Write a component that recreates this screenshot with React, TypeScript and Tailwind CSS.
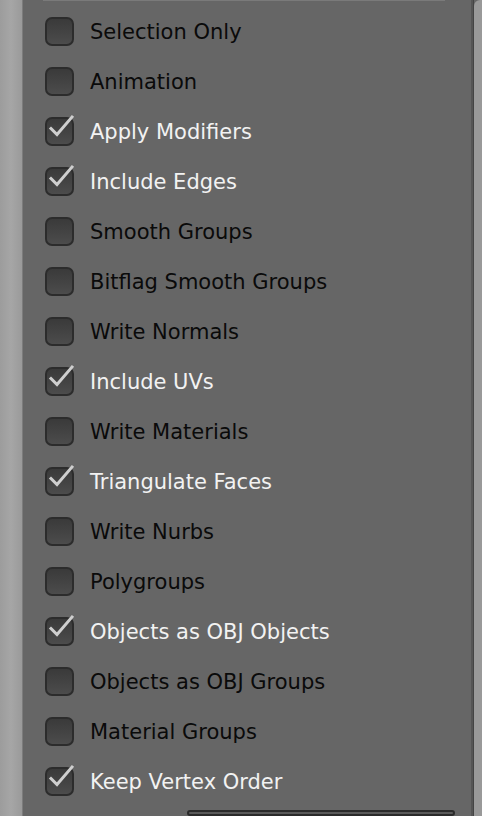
const options: { label: string; checked: boolean }[] = [
  { label: "Selection Only", checked: false },
  { label: "Animation", checked: false },
  { label: "Apply Modifiers", checked: true },
  { label: "Include Edges", checked: true },
  { label: "Smooth Groups", checked: false },
  { label: "Bitflag Smooth Groups", checked: false },
  { label: "Write Normals", checked: false },
  { label: "Include UVs", checked: true },
  { label: "Write Materials", checked: false },
  { label: "Triangulate Faces", checked: true },
  { label: "Write Nurbs", checked: false },
  { label: "Polygroups", checked: false },
  { label: "Objects as OBJ Objects", checked: true },
  { label: "Objects as OBJ Groups", checked: false },
  { label: "Material Groups", checked: false },
  { label: "Keep Vertex Order", checked: true },
];

function Checkbox({ checked }: { checked: boolean }) {
  return (
    <div className="relative w-[29px] h-[29px] shrink-0">
      <div className="w-full h-full rounded-[7px] border-2 border-[#2c2c2c] bg-gradient-to-b from-[#3a3a3a] to-[#4c4c4c]" />
      {checked && (
        <svg
          className="absolute left-0 top-[-5px]"
          width="32"
          height="32"
          viewBox="0 0 32 32"
          fill="none"
        >
          <path
            d="M6 16.5 L12 22.5 L27 5"
            stroke="#cfcfcf"
            strokeWidth="3"
            strokeLinecap="square"
            strokeLinejoin="miter"
          />
        </svg>
      )}
    </div>
  );
}

export default function App() {
  return (
    <div
      className="flex w-[482px] h-[816px] overflow-hidden bg-[#666666]"
      style={{ fontFamily: '"DejaVu Sans", "Liberation Sans", sans-serif' }}
    >
      <div className="w-[23px] shrink-0 bg-gradient-to-r from-[#9c9c9c] via-[#a6a6a6] to-[#9a9a9a] border-r border-[#7c7c7c]" />
      <div className="flex-1 flex flex-col bg-[#666666]">
        <div className="h-px ml-[20px] mr-[26px] bg-[#7a7a7a]" />
        <div className="flex flex-col pt-[6px]">
          {options.map((o) => (
            <div key={o.label} className="flex items-center h-[50px] pl-[22px] gap-[16px]">
              <Checkbox checked={o.checked} />
              <span
                className={
                  "text-[21px] leading-none pt-[3px] " +
                  (o.checked ? "text-[#f2f2f2]" : "text-[#0a0a0a]")
                }
              >
                {o.label}
              </span>
            </div>
          ))}
        </div>
        <div className="mt-[4px] ml-[164px] mr-[16px] h-[30px] rounded-[9px] border-2 border-[#2a2a2a] bg-[#5a5a5a]" />
      </div>
      <div className="w-[2px] shrink-0 bg-[#555555]" />
      <div className="w-px shrink-0 bg-[#444444]" />
      <div className="w-[8px] shrink-0 bg-[#999999] rounded-tl-[6px]" />
    </div>
  );
}
